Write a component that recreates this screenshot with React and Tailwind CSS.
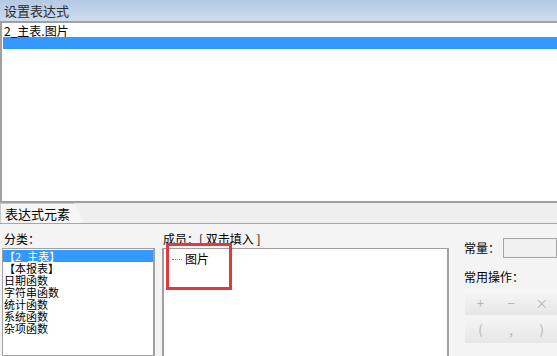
import React from "react";

const font = { fontFamily: '"Noto Sans CJK SC", "Noto Sans", sans-serif' };

const categories = ["【2_主表】", "【本报表】", "日期函数", "字符串函数", "统计函数", "系统函数", "杂项函数"];

const OpButton = ({ children }) => (
  <div className="flex-1 flex items-center justify-center text-[13px] text-[#b4b4b4]">{children}</div>
);

const App = () => {
  return (
    <div className="w-[557px] h-[356px] overflow-hidden bg-[#f4f4f4] flex flex-col text-black" style={font}>
      <div className="h-[21px] shrink-0 bg-gradient-to-b from-[#b4c9e4] to-[#cddcef] px-[4px] flex items-center text-[13px] leading-none text-[#2a2a2a]">
        设置表达式
      </div>
      <div className="h-[182px] shrink-0 bg-white border-t-2 border-l-2 border-b-2 border-[#a0a0a0] pt-[1px]">
        <div className="pl-[2px] text-[12px] leading-[13px] h-[13px]">2_主表.图片</div>
        <div className="ml-[1px] h-[12px] bg-[#3399ff]" />
      </div>
      <div className="h-[21px] shrink-0 bg-[#efefef] border-b border-[#a8a8a8] flex items-end">
        <div className="relative h-[20px] w-[84px] pl-[4px] text-[13px] leading-[20px] bg-[#f6f6f6] border-t border-l border-[#c8c8c8]" style={{ clipPath: "polygon(0 0, 74px 0, 84px 20px, 0 20px)" }}>
          表达式元素
        </div>
      </div>
      <div className="flex-1 flex pt-[8px] min-h-0">
        <div className="w-[155px] shrink-0 flex flex-col pl-[2px]">
          <div className="text-[12px] leading-[14px] h-[16px] pl-[2px]">分类：</div>
          <div className="flex-1 bg-white border border-[#a0a0a0] border-r-2 pt-[1px] flex flex-col">
            {categories.map((c, i) => (
              <div key={c} className={`text-[11px] leading-[12px] h-[12px] pl-[1px] ${i === 0 ? "bg-[#3399ff] text-white" : ""}`}>{c}</div>
            ))}
          </div>
        </div>
        <div className="w-[294px] shrink-0 flex flex-col pl-[7px]">
          <div className="text-[12px] leading-[14px] h-[16px] pl-[1px]">成员：[ 双击填入 ]</div>
          <div className="relative flex-1 bg-white border-l-2 border-t border-r-2 border-[#a0a0a0] pt-[3px] pl-[8px]">
            <div className="flex items-center text-[12px] leading-[13px]">
              <span className="w-[10px] h-[1px] border-b border-dotted border-[#777] mr-[3px] mt-[2px]" />
              图片
            </div>
            <div className="absolute left-[2px] top-[-6px] w-[66px] h-[47px] border-[3px] border-[#e03a3f]" />
          </div>
        </div>
        <div className="flex-1 flex flex-col pl-[15px] pt-[6px]">
          <div className="flex items-center h-[20px]">
            <span className="text-[12px] w-[39px]">常量：</span>
            <div className="flex-1 h-[20px] bg-[#f0f0f0] border border-[#a6a6a6]" />
          </div>
          <div className="text-[12px] leading-[14px] mt-[12px]">常用操作：</div>
          <div className="mt-[6px] ml-[1px] flex flex-col">
            <div className="h-[25px] flex bg-gradient-to-b from-[#f7f7f7] to-[#e6e6e6]">
              <OpButton>+</OpButton>
              <OpButton>−</OpButton>
              <OpButton>×</OpButton>
            </div>
            <div className="h-[27px] flex bg-gradient-to-b from-[#f5f5f5] to-[#e6e6e6] mt-[1px]">
              <OpButton>(</OpButton>
              <OpButton>,</OpButton>
              <OpButton>)</OpButton>
            </div>
          </div>
        </div>
      </div>
    </div>
  );
};

export default App;
